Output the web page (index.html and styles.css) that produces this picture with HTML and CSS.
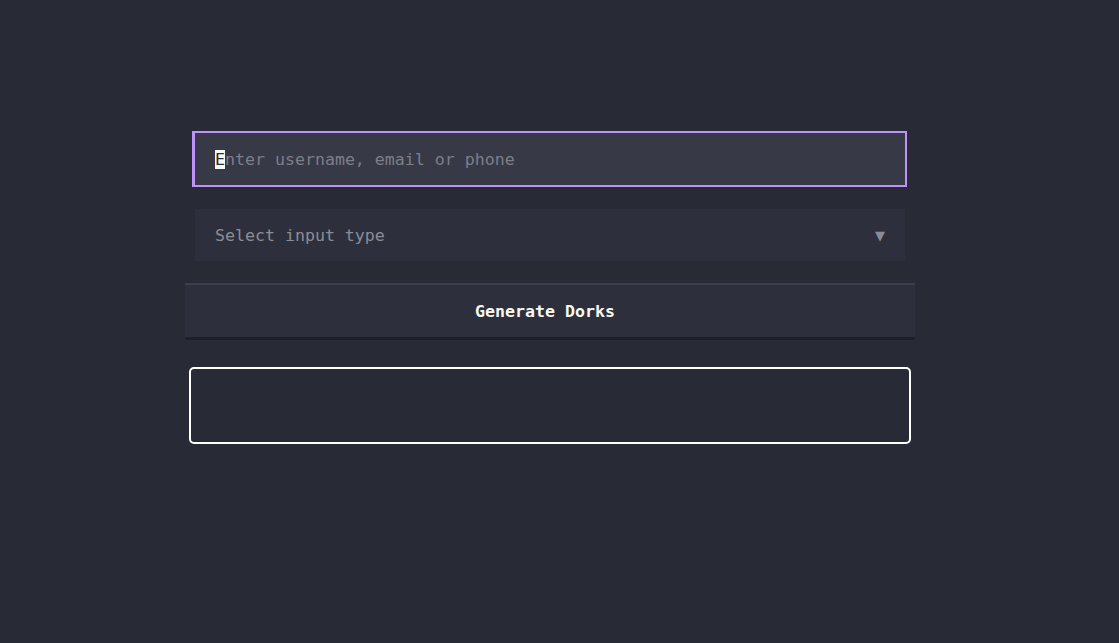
FILE: index.html
```html
<!DOCTYPE html>
<html lang="en">
<head>
<meta charset="utf-8">
<title>Dork Generator</title>
<link rel="stylesheet" href="styles.css">
</head>
<body>
<main class="wrap">
  <div class="field-input"><span class="caret">E</span>nter username, email or phone</div>
  <div class="field-select"><span>Select input type</span><span class="arrow">▼</span></div>
  <button class="btn">Generate Dorks</button>
  <div class="output"></div>
</main>
</body>
</html>
```
FILE: styles.css
```css
html, body {
  margin: 0;
  padding: 0;
  background: #282a36;
  height: 100%;
}
body {
  font-family: "DejaVu Sans Mono", monospace;
  font-size: 16.6px;
}
.wrap {
  width: 730px;
  margin-left: 185px;
  padding-top: 131px;
  display: flex;
  flex-direction: column;
  align-items: center;
}
.field-input {
  box-sizing: border-box;
  width: 715px;
  height: 56px;
  margin-left: -1px;
  border: 2px solid #bd93f9;
  border-left-width: 3px;
  background: #373946;
  color: #7c7e88;
  padding-left: 20px;
  display: flex;
  align-items: center;
  white-space: pre;
}
.caret {
  background: #f8f8f2;
  color: #282a36;
}
.field-select {
  box-sizing: border-box;
  width: 710px;
  height: 52px;
  margin-top: 22px;
  background: #2d303c;
  color: #8b8d94;
  padding: 0 20px;
  display: flex;
  align-items: center;
  justify-content: space-between;
}
.arrow {
  font-size: 16.6px;
  color: #8b8d94;
}
.btn {
  box-sizing: border-box;
  width: 730px;
  height: 57px;
  margin-top: 22px;
  background: #2d303c;
  border: none;
  border-top: 2px solid #3b3e4d;
  border-bottom: 3px solid #1f2029;
  color: #f8f8f2;
  font-family: "DejaVu Sans Mono", monospace;
  font-size: 16.6px;
  font-weight: bold;
  padding: 0 10px 0 0;
}
.output {
  box-sizing: border-box;
  width: 722px;
  height: 77px;
  margin-top: 27px;
  border: 2px solid #ffffff;
  border-radius: 5px;
}
```
